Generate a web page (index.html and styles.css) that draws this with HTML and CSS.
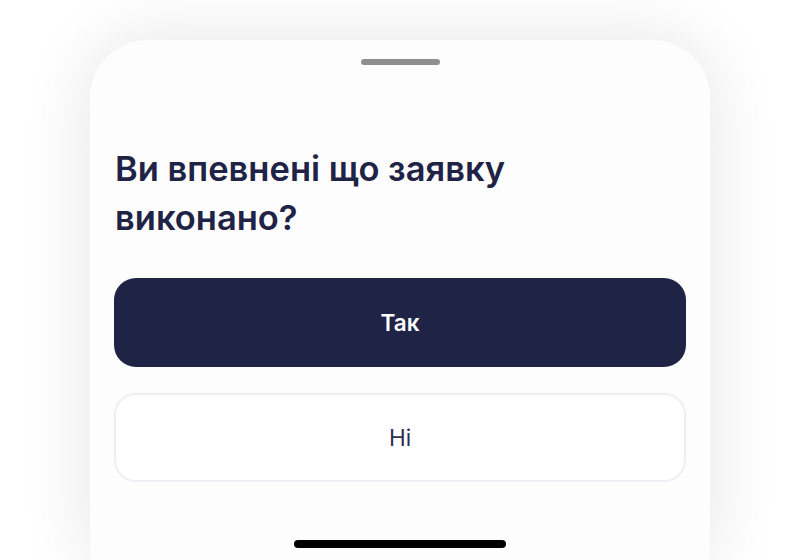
FILE: index.html
```html
<!DOCTYPE html>
<html lang="uk">
<head>
<meta charset="utf-8">
<link rel="stylesheet" href="styles.css">
</head>
<body>
<div class="sheet">
  <div class="handle"></div>
  <h1 class="title">Ви впевнені що заявку виконано?</h1>
  <div class="actions">
    <button class="btn btn-primary">Так</button>
    <button class="btn btn-secondary">Ні</button>
  </div>
  <div class="home-indicator"></div>
</div>
</body>
</html>
```
FILE: styles.css
```css
html, body {
  margin: 0;
  padding: 0;
  background: #ffffff;
  height: 100%;
  overflow: hidden;
}
body {
  font-family: Inter, "Noto Sans", sans-serif;
}
.sheet {
  width: 620px;
  margin: 40px auto 0;
  height: 520px;
  box-sizing: border-box;
  background: #fdfdfd;
  border-radius: 58px 58px 0 0;
  box-shadow: 0 0 70px rgba(0, 0, 0, 0.11);
  padding: 19px 24px 0;
  display: flex;
  flex-direction: column;
}
.handle {
  width: 79px;
  height: 6px;
  border-radius: 3px;
  background: #8f8f8f;
  align-self: center;
}
.title {
  margin: 79px 0 0;
  padding: 0 1px;
  font-size: 34.5px;
  line-height: 49px;
  font-weight: 600;
  color: #1f2346;
  max-width: 440px;
}
.actions {
  margin-top: 36px;
  display: flex;
  flex-direction: column;
  gap: 26px;
}
.btn {
  height: 89px;
  border-radius: 22px;
  font-family: Inter, "Noto Sans", sans-serif;
  font-size: 22.5px;
  cursor: pointer;
}
.btn-primary {
  background: #1f2447;
  border: none;
  color: #ffffff;
  font-weight: 600;
}
.btn-secondary {
  background: #ffffff;
  border: 2px solid #efeef4;
  color: #2b2e52;
  font-weight: 400;
}
.home-indicator {
  width: 212px;
  height: 8px;
  border-radius: 4px;
  background: #000000;
  align-self: center;
  margin-top: 58px;
}
```
